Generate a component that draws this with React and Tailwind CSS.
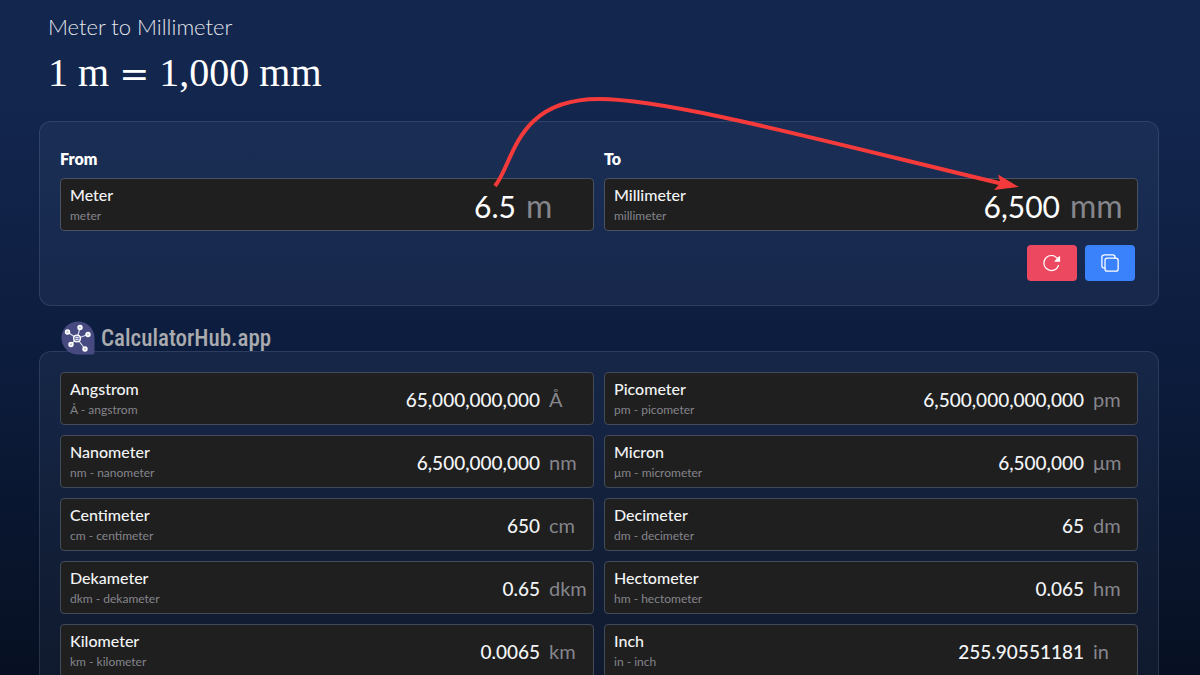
import { IoCopyOutline, IoReload } from "react-icons/io5";

const conversions = [
  { name: "Angstrom", symbol: "Å", detail: "Å - angstrom", value: "65,000,000,000" },
  { name: "Picometer", symbol: "pm", detail: "pm - picometer", value: "6,500,000,000,000" },
  { name: "Nanometer", symbol: "nm", detail: "nm - nanometer", value: "6,500,000,000" },
  { name: "Micron", symbol: "μm", detail: "μm - micrometer", value: "6,500,000" },
  { name: "Centimeter", symbol: "cm", detail: "cm - centimeter", value: "650" },
  { name: "Decimeter", symbol: "dm", detail: "dm - decimeter", value: "65" },
  { name: "Dekameter", symbol: "dkm", detail: "dkm - dekameter", value: "0.65" },
  { name: "Hectometer", symbol: "hm", detail: "hm - hectometer", value: "0.065" },
  { name: "Kilometer", symbol: "km", detail: "km - kilometer", value: "0.0065" },
  { name: "Inch", symbol: "in", detail: "in - inch", value: "255.90551181" },
];

const UnitName = ({ name, detail }) => (
  <div className="shrink-0 pt-[3px]">
    <div className="text-base leading-5 font-medium text-gray-100">{name}</div>
    <div className="text-xs leading-[22px] text-[#85858c]">{detail}</div>
  </div>
);

const UnitField = ({ id, label, name, detail, value, symbol }) => (
  <div className="flex-1 min-w-0">
    <label htmlFor={id} className="block text-base leading-5 font-extrabold text-white mb-[9px]">
      {label}
    </label>
    <div className="flex items-center h-[53px] pl-[9px] rounded border border-[#4a5262] bg-[#1f1f1f]">
      <UnitName name={name} detail={detail} />
      <input
        id={id}
        type="text"
        defaultValue={value}
        className="flex-1 min-w-0 pt-[2px] bg-transparent text-right text-[30px] leading-9 text-white outline-none"
      />
      <span className="w-[77px] shrink-0 pl-[10px] pt-[2px] text-[32px] leading-9 text-[#85858c]">{symbol}</span>
    </div>
  </div>
);

const ConversionRow = ({ name, symbol, detail, value }) => (
  <li className="flex items-center h-[53px] pl-[9px] rounded border border-[#434a59] bg-[#1f1f1f]">
    <UnitName name={name} detail={detail} />
    <span className="flex-1 pt-[2px] text-right text-[19px] leading-6 font-medium text-gray-100">{value}</span>
    <span className="w-[53px] shrink-0 pl-[9px] text-[20px] leading-6 text-[#85858c]">{symbol}</span>
  </li>
);

const Logo = () => (
  <a href="#" className="relative z-10 flex items-center gap-[6px]">
    <svg viewBox="0 0 34 34" className="w-[34px] h-[34px]">
      <path d="M17 0.500A16.500 16.500 0 0 0 17 33.500H31.500Q33.500 33.500 33.500 31.500V17A16.500 16.500 0 0 0 17 0.500Z" fill="#464a80" />
      <g stroke="#d9dbea" strokeWidth="1.200">
        <path d="M16 17.500L19 7M16 17.500L6.500 11M16 17.500L27 13.500M16 17.500L10 23.500M16 17.500L24 28" />
      </g>
      <g fill="#b9bdd8" stroke="#fff" strokeWidth="1.600">
        <circle cx="19" cy="6.500" r="1.900" />
        <circle cx="6.500" cy="11" r="1.900" />
        <circle cx="27" cy="13.500" r="1.900" />
        <circle cx="10" cy="23.500" r="1.900" />
        <circle cx="24" cy="28" r="1.900" />
      </g>
      <circle cx="16" cy="17.500" r="3.400" fill="#7d82b3" stroke="#fff" strokeWidth="1.300" />
      <path d="M14.500 16.500H17.500M14.500 18.500H17.500" stroke="#fff" strokeWidth="0.800" />
    </svg>
    <span className="pt-[2px] font-['Roboto_Condensed',Roboto,sans-serif] text-[23px] leading-8 font-medium text-[#a9abae]">
      CalculatorHub.app
    </span>
  </a>
);

const Arrow = () => (
  <svg viewBox="0 0 1200 200" className="absolute top-0 left-0 w-full pointer-events-none">
    <path
      d="M495 186C514 163 515 99 599 99C668 99 820 140 1003 184"
      fill="none"
      stroke="#f43a3a"
      strokeWidth="4"
    />
    <path d="M1019 187L998 174.500L1000.500 183L994 190Z" fill="#f43a3a" />
  </svg>
);

const App = () => {
  return (
    <main className="relative h-screen overflow-hidden pl-[39px] pr-[41px] bg-linear-to-b from-[#13264e] from-15% via-[#0d1d3f] via-50% to-[#071022] font-[Lato,sans-serif]">
      <header className="h-[121px] pt-3 pl-[9px]">
        <h1 className="text-[22px] leading-[30px] font-light text-gray-200">Meter to Millimeter</h1>
        <p className="flex items-baseline gap-[10px] pt-2 font-['Liberation_Serif',serif] text-[40px] leading-[46px] text-white">
          <span>1</span>
          <span>m</span>
          <span className="font-['DejaVu_Serif',serif] text-[36px]">=</span>
          <span>1,000</span>
          <span>mm</span>
        </p>
      </header>

      <section className="p-5 pb-6 pt-[27px] rounded-xl border border-[#a9bfe0]/15 bg-[#8fb0d8]/7">
        <div className="flex gap-[10px]">
          <UnitField id="from" label="From" name="Meter" detail="meter" value="6.5" symbol="m" />
          <UnitField id="to" label="To" name="Millimeter" detail="millimeter" value="6,500" symbol="mm" />
        </div>
        <div className="flex justify-end gap-2 mt-[14px] pr-[3px]">
          <button type="button" aria-label="Reset" className="flex items-center justify-center w-[50px] h-9 rounded bg-[#ec485f] text-white">
            <IoReload size={20} />
          </button>
          <button type="button" aria-label="Copy" className="flex items-center justify-center w-[50px] h-9 rounded bg-[#3a82fb] text-white">
            <IoCopyOutline size={20} />
          </button>
        </div>
      </section>

      <div className="flex items-start h-[45px] pt-[15px] pl-[22px]">
        <Logo />
      </div>

      <section className="p-5 rounded-xl border border-[#a9bfe0]/15 bg-[#8fb0d8]/7">
        <ul className="grid grid-cols-2 gap-[10px]">
          {conversions.map((item) => (
            <ConversionRow key={item.name} {...item} />
          ))}
        </ul>
      </section>

      <Arrow />
    </main>
  );
};

export default App;
